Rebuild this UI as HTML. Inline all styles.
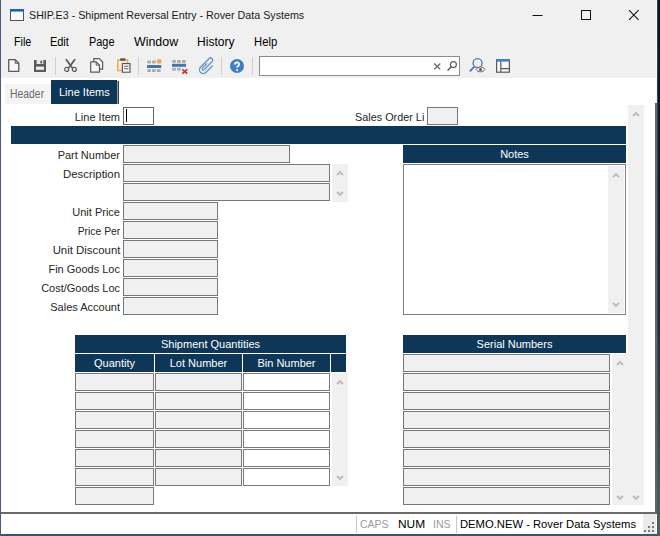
<!DOCTYPE html>
<html>
<head>
<meta charset="utf-8">
<title>SHIP.E3</title>
<style>
html,body{margin:0;padding:0;}
body{width:660px;height:536px;position:relative;overflow:hidden;background:#f0f0f0;font-family:"Liberation Sans",sans-serif;font-size:12px;color:#000;}
.a{position:absolute;}
.t{position:absolute;white-space:nowrap;line-height:14px;transform-origin:0 50%;}
.lbl{position:absolute;white-space:nowrap;font-size:11px;line-height:14px;text-align:right;color:#262626;transform-origin:100% 50%;}
.f{position:absolute;box-sizing:border-box;background:#f0f0f0;border:1px solid #787878;}
.w{position:absolute;box-sizing:border-box;background:#fff;border:1px solid #7a7a7a;}
.nv{position:absolute;background:#0e3757;color:#fff;font-size:11px;line-height:18px;text-align:center;white-space:nowrap;}
.sb{position:absolute;background:#f0f0f0;}
.menu{position:absolute;top:35px;font-size:12px;line-height:15px;white-space:nowrap;color:#000;transform-origin:0 50%;}
.st{position:absolute;top:517px;font-size:11.5px;line-height:15px;white-space:nowrap;transform-origin:0 50%;}
svg{position:absolute;overflow:visible;}
</style>
</head>
<body>
<!-- window chrome -->
<div class="a" style="left:0;top:0;width:660px;height:78px;background:#f0f0f0;"></div>
<div class="a" style="left:0;top:78px;width:657px;height:434px;background:#fff;"></div>
<div class="a" style="left:1px;top:512px;width:655px;height:2px;background:#6a6a6a;"></div>
<div class="a" style="left:0;top:514px;width:657px;height:20px;background:#fff;"></div>
<div class="a" style="left:643px;top:514px;width:13px;height:20px;background:#ebebeb;"></div>
<svg style="left:644px;top:522px" width="10" height="10" viewBox="0 0 10 10"><g fill="#7a7a7a"><rect x="8" y="0" width="2" height="2"/><rect x="4" y="4" width="2" height="2"/><rect x="8" y="4" width="2" height="2"/><rect x="0" y="8" width="2" height="2"/><rect x="4" y="8" width="2" height="2"/><rect x="8" y="8" width="2" height="2"/></g></svg>
<div class="a" style="left:0;top:534px;width:660px;height:2px;background:#3e5272;"></div>
<div class="a" style="left:0;top:0;width:1px;height:536px;background:#4a5a78;"></div>
<!-- right edge desktop strip -->
<div class="a" style="left:656px;top:0;width:1px;height:103px;background:#f4f7ff;"></div>
<div class="a" style="left:655px;top:103px;width:2px;height:411px;background:#5c6672;"></div>
<div class="a" style="left:657px;top:0;width:1px;height:536px;background:linear-gradient(#39445a 0%,#3a4452 50%,#4a5a56 100%);"></div>
<div class="a" style="left:658px;top:0;width:2px;height:536px;background:linear-gradient(#0c1422 0%,#141c2a 35%,#222c38 60%,#3c4a48 80%,#506458 100%);"></div>

<!-- title -->
<svg style="left:10px;top:9px" width="14" height="12" viewBox="0 0 14 12"><rect x="0.5" y="0.5" width="13" height="11" fill="#fbfbfb" stroke="#555" stroke-width="1"/><rect x="0" y="0" width="14" height="2.6" fill="#1f60c0"/></svg>
<div class="t" style="left:29px;top:8px;line-height:15px;font-size:11.5px;color:#1a1a1a;transform:scaleX(0.9307);">SHIP.E3 - Shipment Reversal Entry - Rover Data Systems</div>
<svg style="left:532px;top:9px" width="112" height="12" viewBox="0 0 112 12"><path d="M0.5 6.5H10.5" stroke="#111" stroke-width="1" fill="none"/><rect x="49.5" y="1.5" width="9" height="9" fill="none" stroke="#111"/><path d="M97 1.2L106.6 10.8M106.6 1.2L97 10.8" stroke="#111" stroke-width="1.1" fill="none"/></svg>

<!-- menu -->
<div class="menu" style="left:14px;transform:scaleX(0.8945);">File</div>
<div class="menu" style="left:50px;transform:scaleX(0.9087);">Edit</div>
<div class="menu" style="left:89px;transform:scaleX(0.9097);">Page</div>
<div class="menu" style="left:134px;transform:scaleX(1.033);">Window</div>
<div class="menu" style="left:197px;transform:scaleX(1.0043);">History</div>
<div class="menu" style="left:254px;transform:scaleX(0.9397);">Help</div>

<!-- toolbar -->

<!-- new -->
<svg style="left:8px;top:59px" width="12" height="13" viewBox="0 0 12 13"><path d="M0.7 0.7H7.2L10.8 4.3V12.3H0.7Z" fill="#f7f7f7" stroke="#5a5a5a" stroke-width="1.3" stroke-linejoin="round"/><path d="M7.2 0.7V4.3H10.8" fill="none" stroke="#5a5a5a" stroke-width="1"/></svg>
<!-- save -->
<svg style="left:34px;top:60px" width="12" height="12" viewBox="0 0 12 12"><path d="M0 0H12V12H0Z" fill="#5a5a5a"/><rect x="2.6" y="0" width="6.8" height="4" fill="#e9e9e9"/><rect x="6.3" y="0.8" width="1.8" height="2.6" fill="#5a5a5a"/><rect x="2" y="6.6" width="8" height="3.2" fill="#f0f0f0"/></svg>
<div class="a" style="left:55px;top:57px;width:1px;height:18px;background:#cfcfcf;"></div>
<!-- cut -->
<svg style="left:64px;top:59px" width="13" height="13" viewBox="0 0 13 13"><path d="M2 0.3L8.6 9.2M11 0.3L4.4 9.2" stroke="#5a5a5a" stroke-width="1.5" fill="none"/><path d="M2 0.3L6.5 6.4L4.9 4.4Z M11 0.3L6.5 6.4L8.1 4.4Z" fill="#5a5a5a" stroke="#5a5a5a" stroke-width="1.2"/><circle cx="2.7" cy="10.4" r="2" fill="#f0f0f0" stroke="#5a5a5a" stroke-width="1.2"/><circle cx="10.3" cy="10.4" r="2" fill="#f0f0f0" stroke="#5a5a5a" stroke-width="1.2"/></svg>
<!-- copy -->
<svg style="left:90px;top:58px" width="14" height="15" viewBox="0 0 14 15"><path d="M3.8 0.7H9.3L12.6 4V11.2H3.8Z" fill="#f7f7f7" stroke="#5a5a5a" stroke-width="1.2" stroke-linejoin="round"/><path d="M0.7 3.8H6.2L9.5 7.1V14.2H0.7Z" fill="#f7f7f7" stroke="#5a5a5a" stroke-width="1.2" stroke-linejoin="round"/><path d="M6.2 3.8V7.1H9.5" fill="none" stroke="#5a5a5a" stroke-width="1"/></svg>
<!-- paste -->
<svg style="left:117px;top:58px" width="14" height="15" viewBox="0 0 14 15"><path d="M0.8 2H10.6V12.6H0.8Z" fill="#fdebd2" stroke="#e9a95b" stroke-width="1.5"/><rect x="3" y="0.2" width="5.6" height="2.6" rx="1" fill="#5a5a5a"/><rect x="5.4" y="5.6" width="7.6" height="8.6" fill="#fff" stroke="#5a5a5a" stroke-width="1.2"/><path d="M7 8.3H11.5M7 10.7H11.5" stroke="#5a5a5a" stroke-width="1.1"/></svg>
<div class="a" style="left:138px;top:57px;width:1px;height:18px;background:#cfcfcf;"></div>
<!-- grid insert -->
<svg style="left:147px;top:59px" width="15" height="14" viewBox="0 0 15 14"><rect x="0.3" y="1.6" width="3.6" height="2.8" fill="#a9a9a9"/><rect x="5.1" y="1.6" width="3.6" height="2.8" fill="#a9a9a9"/><rect x="10" y="0.2" width="4.4" height="4.2" rx="1.2" fill="#f0a850"/><rect x="0" y="6" width="14.3" height="3" fill="#3f76b8"/><rect x="0.3" y="10.2" width="3.6" height="2.8" fill="#a9a9a9"/><rect x="5.1" y="10.2" width="3.6" height="2.8" fill="#a9a9a9"/><rect x="10" y="10.2" width="3.6" height="2.8" fill="#a9a9a9"/></svg>
<!-- grid delete -->
<svg style="left:172px;top:59px" width="16" height="15" viewBox="0 0 16 15"><rect x="0.3" y="1" width="3.6" height="2.8" fill="#a9a9a9"/><rect x="5.1" y="1" width="3.6" height="2.8" fill="#a9a9a9"/><rect x="10" y="1" width="3.6" height="2.8" fill="#a9a9a9"/><rect x="0" y="4.8" width="14" height="3" fill="#3f76b8"/><rect x="0.3" y="8.8" width="3.6" height="2.8" fill="#a9a9a9"/><rect x="5.1" y="8.8" width="3.6" height="2.8" fill="#a9a9a9"/><path d="M10.3 10.3L15.3 14.6M15.3 10.3L10.3 14.6" stroke="#c8323c" stroke-width="1.7" fill="none"/></svg>
<!-- paperclip -->
<svg style="left:198px;top:57px" width="17" height="18" viewBox="0 0 17 18"><g transform="translate(8.5,9.5) rotate(45)" fill="none" stroke-linecap="round"><path d="M3.75 -4.6L3.75 4.65A3.75 3.75 0 0 1 -3.75 4.65L-3.75 -7.4A2.1 2.1 0 0 1 0.45 -7.4L0.45 3.85A1.15 1.15 0 0 1 -1.85 3.85L-1.85 -2.2" stroke="#dce9f8" stroke-width="3.2"/><path d="M3.75 -4.6L3.75 4.65A3.75 3.75 0 0 1 -3.75 4.65L-3.75 -7.4A2.1 2.1 0 0 1 0.45 -7.4L0.45 3.85A1.15 1.15 0 0 1 -1.85 3.85L-1.85 -2.2" stroke="#5f7fab" stroke-width="0.95"/></g></svg>
<div class="a" style="left:221px;top:57px;width:1px;height:18px;background:#cfcfcf;"></div>
<!-- help -->
<svg style="left:230px;top:59px" width="14" height="14" viewBox="0 0 14 14"><circle cx="7" cy="7" r="7" fill="#3f7ec4"/><path d="M4.9 5.4C4.9 2.6 9.2 2.7 9.2 5.3C9.2 7 7.1 6.9 7.1 8.6" fill="none" stroke="#fff" stroke-width="1.7"/><circle cx="7.1" cy="10.9" r="1" fill="#fff"/></svg>
<div class="a" style="left:252px;top:57px;width:1px;height:18px;background:#cfcfcf;"></div>
<!-- search box -->
<div class="a" style="left:259px;top:56px;width:201px;height:20px;box-sizing:border-box;background:#fff;border:1px solid #8c8c8c;"></div>
<svg style="left:434px;top:63px" width="7" height="7" viewBox="0 0 7 7"><path d="M0.3 0.5L6.3 6.3M6.3 0.5L0.3 6.3" stroke="#555" stroke-width="1.1" fill="none"/></svg>
<svg style="left:447px;top:61px" width="11" height="10" viewBox="0 0 11 10"><circle cx="6.4" cy="3.6" r="3" fill="none" stroke="#555" stroke-width="1.1"/><path d="M4.2 5.8L0.6 9.4" stroke="#555" stroke-width="1.4" fill="none"/></svg>
<!-- search eye -->
<svg style="left:469px;top:58px" width="17" height="15" viewBox="0 0 17 15"><circle cx="8.6" cy="5.2" r="4.5" fill="none" stroke="#3f76b8" stroke-width="1.3"/><path d="M5.4 8.6L0.8 13.4" stroke="#3f76b8" stroke-width="1.6" fill="none"/><path d="M7 11.4C9 8.2 14 8.2 16 11.4C14 14.6 9 14.6 7 11.4Z" fill="#f4f4f4" stroke="#666" stroke-width="1"/><circle cx="11.5" cy="11.4" r="1.5" fill="#555"/></svg>
<!-- layout -->
<svg style="left:496px;top:59px" width="14" height="14" viewBox="0 0 14 14"><rect x="0.6" y="0.6" width="12.8" height="12.6" fill="#f7f7f7" stroke="#5a5a5a" stroke-width="1.2"/><rect x="0" y="0" width="14" height="2.6" fill="#3f7ec4"/><path d="M4.8 2.6V13.2M4.8 9.6H13.4" stroke="#5a5a5a" stroke-width="1.2" fill="none"/></svg>


<!-- tabs -->
<div class="a" style="left:5px;top:84px;width:46px;height:19.5px;background:#f4f4f4;"></div>
<div class="t" style="left:10px;top:87px;font-size:12px;color:#6a6a6a;transform:scaleX(0.8664);">Header</div>
<div class="a" style="left:51px;top:80px;width:66px;height:23.5px;background:#0e3757;"></div>
<div class="a" style="left:117px;top:81px;width:1px;height:22.5px;background:#8f9aa6;"></div><div class="a" style="left:118px;top:81px;width:1px;height:22.5px;background:#33424f;"></div>
<div class="t" style="left:59px;top:85px;font-size:11px;color:#fff;">Line Items</div>

<!-- top row -->
<div class="lbl" style="right:540px;top:110px;">Line Item</div>
<div class="w" style="left:123px;top:107px;width:31px;height:18px;border-color:#666;"></div>
<div class="a" style="left:126px;top:109px;width:1px;height:13px;background:#000;"></div>
<div class="lbl" style="right:236px;top:110px;transform:scaleX(0.985);">Sales Order Li</div>
<div class="f" style="left:427px;top:107px;width:31px;height:18px;"></div>

<div class="nv" style="left:11px;top:126px;width:615px;height:18px;"></div>

<!-- left fields -->
<div class="lbl" style="right:540px;top:148px;">Part Number</div>
<div class="f" style="left:123px;top:145px;width:167px;height:18px;"></div>
<div class="lbl" style="right:540px;top:167px;transform:scaleX(1.036);">Description</div>
<div class="f" style="left:123px;top:164px;width:207px;height:18px;"></div>
<div class="f" style="left:123px;top:183px;width:207px;height:18px;"></div>
<div class="sb" style="left:332px;top:164px;width:16px;height:38px;"></div>
<div class="lbl" style="right:540px;top:205px;">Unit Price</div>
<div class="f" style="left:123px;top:202px;width:95px;height:18px;"></div>
<div class="lbl" style="right:540px;top:224px;transform:scaleX(0.94);">Price Per</div>
<div class="f" style="left:123px;top:221px;width:95px;height:18px;"></div>
<div class="lbl" style="right:540px;top:243px;transform:scaleX(1.036);">Unit Discount</div>
<div class="f" style="left:123px;top:240px;width:95px;height:18px;"></div>
<div class="lbl" style="right:540px;top:262px;">Fin Goods Loc</div>
<div class="f" style="left:123px;top:259px;width:95px;height:18px;"></div>
<div class="lbl" style="right:540px;top:281px;">Cost/Goods Loc</div>
<div class="f" style="left:123px;top:278px;width:95px;height:18px;"></div>
<div class="lbl" style="right:540px;top:300px;">Sales Account</div>
<div class="f" style="left:123px;top:297px;width:95px;height:18px;"></div>

<!-- notes -->
<div class="nv" style="left:403px;top:145px;width:223px;height:18px;">Notes</div>
<div class="w" style="left:403px;top:164px;width:223px;height:151px;border-color:#828282;"></div>
<div class="sb" style="left:608px;top:166px;width:16px;height:147px;"></div>

<!-- shipment quantities -->
<div class="nv" style="left:75px;top:335px;width:271px;height:18px;">Shipment Quantities</div>
<div class="nv" style="left:75px;top:354px;width:79px;height:18px;">Quantity</div>
<div class="nv" style="left:155px;top:354px;width:87px;height:18px;">Lot Number</div>
<div class="nv" style="left:243px;top:354px;width:87px;height:18px;">Bin Number</div>
<div class="nv" style="left:331px;top:354px;width:15px;height:18px;"></div>
<div class="f" style="left:75px;top:373px;width:79px;height:18px;"></div>
<div class="f" style="left:155px;top:373px;width:87px;height:18px;"></div>
<div class="w" style="left:243px;top:373px;width:87px;height:18px;"></div>
<div class="f" style="left:75px;top:392px;width:79px;height:18px;"></div>
<div class="f" style="left:155px;top:392px;width:87px;height:18px;"></div>
<div class="w" style="left:243px;top:392px;width:87px;height:18px;"></div>
<div class="f" style="left:75px;top:411px;width:79px;height:18px;"></div>
<div class="f" style="left:155px;top:411px;width:87px;height:18px;"></div>
<div class="w" style="left:243px;top:411px;width:87px;height:18px;"></div>
<div class="f" style="left:75px;top:430px;width:79px;height:18px;"></div>
<div class="f" style="left:155px;top:430px;width:87px;height:18px;"></div>
<div class="w" style="left:243px;top:430px;width:87px;height:18px;"></div>
<div class="f" style="left:75px;top:449px;width:79px;height:18px;"></div>
<div class="f" style="left:155px;top:449px;width:87px;height:18px;"></div>
<div class="w" style="left:243px;top:449px;width:87px;height:18px;"></div>
<div class="f" style="left:75px;top:468px;width:79px;height:18px;"></div>
<div class="f" style="left:155px;top:468px;width:87px;height:18px;"></div>
<div class="w" style="left:243px;top:468px;width:87px;height:18px;"></div>
<div class="f" style="left:75px;top:487px;width:79px;height:18px;"></div>
<div class="sb" style="left:332px;top:373px;width:16px;height:113px;"></div>

<!-- serial numbers -->
<div class="nv" style="left:403px;top:335px;width:223px;height:18px;">Serial Numbers</div>
<div class="f" style="left:403px;top:354px;width:207px;height:18px;"></div>
<div class="f" style="left:403px;top:373px;width:207px;height:18px;"></div>
<div class="f" style="left:403px;top:392px;width:207px;height:18px;"></div>
<div class="f" style="left:403px;top:411px;width:207px;height:18px;"></div>
<div class="f" style="left:403px;top:430px;width:207px;height:18px;"></div>
<div class="f" style="left:403px;top:449px;width:207px;height:18px;"></div>
<div class="f" style="left:403px;top:468px;width:207px;height:18px;"></div>
<div class="f" style="left:403px;top:487px;width:207px;height:18px;"></div>
<div class="sb" style="left:612px;top:354px;width:16px;height:151px;"></div>
<div class="sb" style="left:628px;top:105px;width:16px;height:400px;"></div>

<!-- chevrons -->
<svg style="left:335.5px;top:170px" width="8" height="6" viewBox="0 0 8 6"><path d="M1 5.2L4 2L7 5.2" fill="none" stroke="#bcbcbc" stroke-width="1.9"/></svg>
<svg style="left:335.5px;top:191px" width="8" height="6" viewBox="0 0 8 6"><path d="M1 0.8L4 4L7 0.8" fill="none" stroke="#bcbcbc" stroke-width="1.9"/></svg>
<svg style="left:611.5px;top:172px" width="8" height="6" viewBox="0 0 8 6"><path d="M1 5.2L4 2L7 5.2" fill="none" stroke="#bcbcbc" stroke-width="1.9"/></svg>
<svg style="left:611.5px;top:302px" width="8" height="6" viewBox="0 0 8 6"><path d="M1 0.8L4 4L7 0.8" fill="none" stroke="#bcbcbc" stroke-width="1.9"/></svg>
<svg style="left:335.5px;top:379px" width="8" height="6" viewBox="0 0 8 6"><path d="M1 5.2L4 2L7 5.2" fill="none" stroke="#bcbcbc" stroke-width="1.9"/></svg>
<svg style="left:335.5px;top:475px" width="8" height="6" viewBox="0 0 8 6"><path d="M1 0.8L4 4L7 0.8" fill="none" stroke="#bcbcbc" stroke-width="1.9"/></svg>
<svg style="left:615.5px;top:360px" width="8" height="6" viewBox="0 0 8 6"><path d="M1 5.2L4 2L7 5.2" fill="none" stroke="#bcbcbc" stroke-width="1.9"/></svg>
<svg style="left:615.5px;top:495px" width="8" height="6" viewBox="0 0 8 6"><path d="M1 0.8L4 4L7 0.8" fill="none" stroke="#bcbcbc" stroke-width="1.9"/></svg>
<svg style="left:631.5px;top:111px" width="8" height="6" viewBox="0 0 8 6"><path d="M1 5.2L4 2L7 5.2" fill="none" stroke="#bcbcbc" stroke-width="1.9"/></svg>
<svg style="left:631.5px;top:495px" width="8" height="6" viewBox="0 0 8 6"><path d="M1 0.8L4 4L7 0.8" fill="none" stroke="#bcbcbc" stroke-width="1.9"/></svg>
<!-- status bar -->
<div class="a" style="left:356px;top:516px;width:1px;height:17px;background:#c8c8c8;"></div>
<div class="a" style="left:456px;top:516px;width:1px;height:17px;background:#c8c8c8;"></div>
<div class="st" style="left:360px;color:#9a9a9a;transform:scaleX(0.913);">CAPS</div>
<div class="st" style="left:398px;color:#000;transform:scaleX(1.035);">NUM</div>
<div class="st" style="left:433px;color:#9a9a9a;transform:scaleX(0.912);">INS</div>
<div class="st" style="left:460px;color:#000;transform:scaleX(0.9767);">DEMO.NEW - Rover Data Systems</div>
</body>
</html>
